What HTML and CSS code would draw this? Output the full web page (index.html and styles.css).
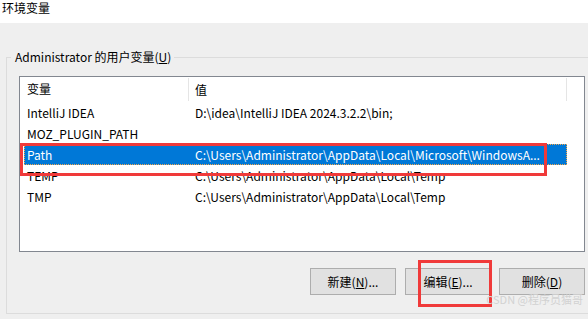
FILE: index.html
```html
<!DOCTYPE html>
<html lang="zh-CN">
<head>
  <meta charset="UTF-8" />
  <title>环境变量</title>
  <link rel="stylesheet" href="styles.css">
</head>
<body>
  <div class="titulo">环境变量</div>

  <div class="janela">
    <fieldset class="grupo">
      <legend>Administrator 的用户变量(<u>U</u>)</legend>

      <div class="lista">
        <div class="linha cabecalho">
          <span class="col-nome">变量</span>
          <span class="col-valor">值</span>
        </div>
        <div class="linha"><span class="col-nome">IntelliJ IDEA</span><span class="col-valor">D:\idea\IntelliJ IDEA 2024.3.2.2\bin;</span></div>
        <div class="linha"><span class="col-nome">MOZ_PLUGIN_PATH</span><span class="col-valor"></span></div>
        <div class="linha selecionada"><span class="col-nome">Path</span><span class="col-valor">C:\Users\Administrator\AppData\Local\Microsoft\WindowsA...</span></div>
        <div class="linha"><span class="col-nome">TEMP</span><span class="col-valor">C:\Users\Administrator\AppData\Local\Temp</span></div>
        <div class="linha"><span class="col-nome">TMP</span><span class="col-valor">C:\Users\Administrator\AppData\Local\Temp</span></div>
      </div>

      <div class="botoes">
        <button>新建(<u>N</u>)...</button>
        <button>编辑(<u>E</u>)...</button>
        <button>删除(<u>D</u>)</button>
      </div>
    </fieldset>

    <div class="marca marca-path"></div>
    <div class="marca marca-editar"></div>
    <div class="watermark">CSDN @程序员猫哥</div>
  </div>
</body>
</html>
```

FILE: styles.css
```css
* {
  box-sizing: border-box;
}

body {
  margin: 0;
  font-family: "Noto Sans CJK SC", "Noto Sans", sans-serif;
  font-size: 12px;
  color: #000000;
  background-color: #f0f0f0;
  overflow: hidden;
}

.titulo {
  height: 23px;
  padding: 0 2px;
  line-height: 16px;
  background-color: #ffffff;
}

.janela {
  position: relative;
  height: 296px;
  padding-top: 26px;
  background-color: #efefef;
}

.grupo {
  margin: 0 -20px 0 6px;
  padding: 11px 0 18px 12px;
  height: 265px;
  border: 1px solid #dcdcdc;
}

.grupo legend {
  margin-left: -8px;
  padding: 0 3px 0 4px;
  line-height: 16px;
}

.lista {
  width: 566px;
  height: 176px;
  padding: 0 4px;
  background-color: #ffffff;
  border: 1px solid #828790;
}

.linha {
  display: flex;
  height: 21px;
  line-height: 21px;
  white-space: nowrap;
}

.cabecalho {
  height: 25px;
  line-height: 24px;
}

.col-nome {
  width: 164px;
  padding-left: 3px;
  flex-shrink: 0;
}

.col-valor {
  width: 379px;
  padding: 0 4px 0 7px;
  overflow: hidden;
}

.cabecalho .col-valor {
  border-left: 1px solid #e5e5e5;
  border-right: 1px solid #e5e5e5;
  height: 23px;
  margin-top: 1px;
  padding-left: 6px;
}

.selecionada {
  background-color: #0078d7;
  color: #ffffff;
  outline: 1px dotted #f3a64b;
  outline-offset: -1px;
  width: 543px;
}

.botoes {
  display: flex;
  justify-content: flex-end;
  gap: 8px;
  width: 566px;
  margin-top: 16px;
}

.botoes button {
  width: 86px;
  height: 27px;
  padding: 0;
  font-family: inherit;
  font-size: 12px;
  color: #000000;
  background-color: #e1e1e1;
  border: 1px solid #adadad;
}

.botoes button:first-child {
  margin-right: 1px;
}

.marca {
  position: absolute;
  border: 3px solid #f03a3a;
}

.marca-path {
  left: 20px;
  top: 120px;
  width: 527px;
  height: 33px;
}

.marca-editar {
  left: 418px;
  top: 237px;
  width: 74px;
  height: 47px;
}

.watermark {
  position: absolute;
  right: 5px;
  top: 268px;
  font-size: 11px;
  line-height: 16px;
  white-space: nowrap;
  color: #d2d2d2;
}
```
